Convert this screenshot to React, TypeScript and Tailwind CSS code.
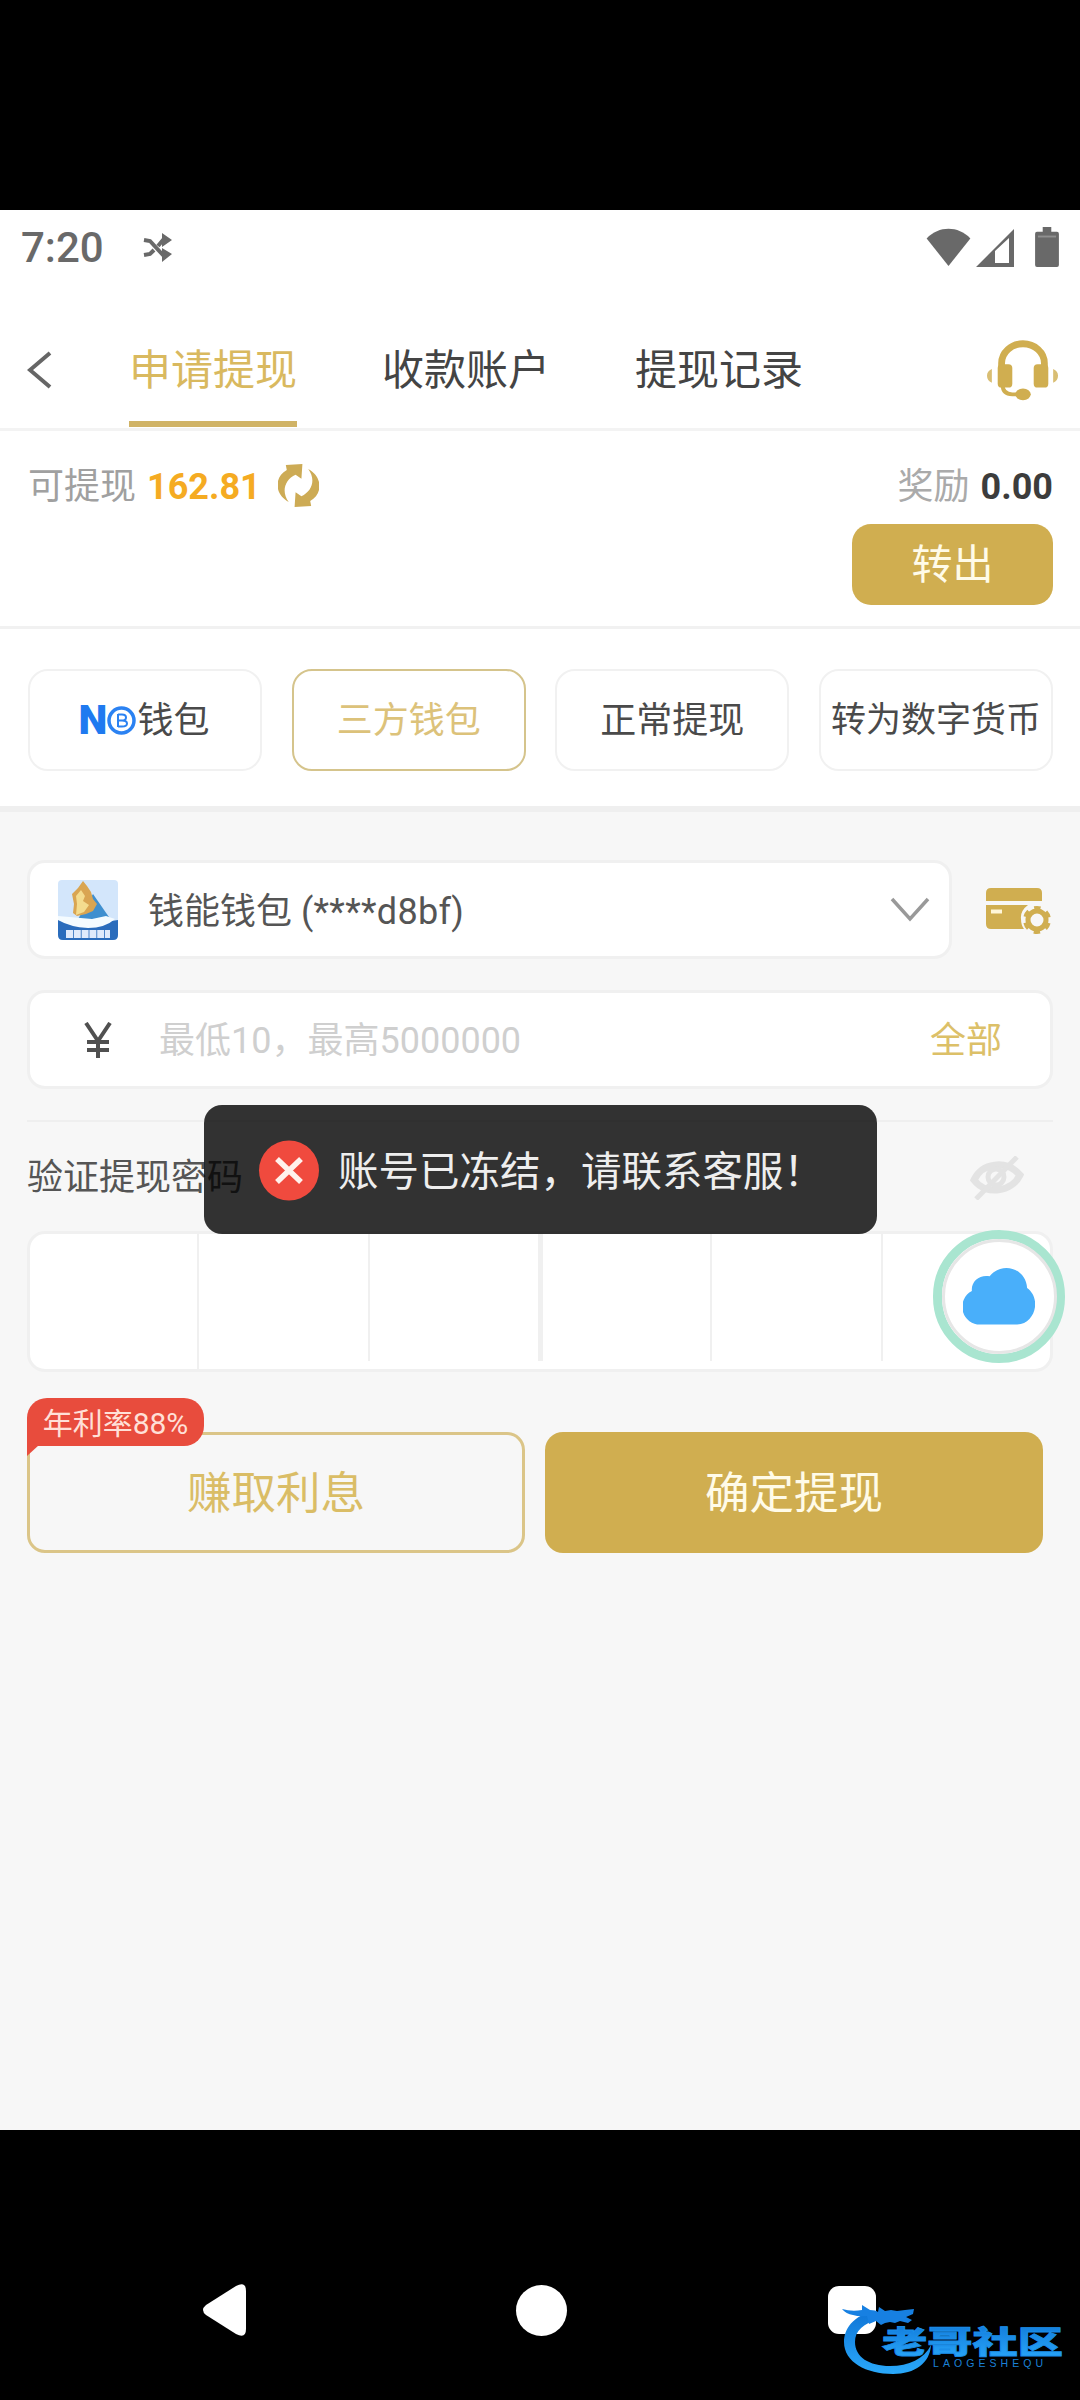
import clsx from 'clsx';

const tabs = ['申请提现', '收款账户', '提现记录'];
const methods = ['钱包', '三方钱包', '正常提现', '转为数字货币'];

function StatusBar() {
  return (
    <div className="flex h-[76px] items-center pl-[21px] pr-[21px] text-[#696969]">
      <span className="w-[84px] text-[42px] font-medium leading-none">7:20</span>
      <svg className="ml-[38px]" width="30" height="30" viewBox="0 0 30 30" fill="none" stroke="currentColor" strokeWidth="4">
        <path d="M1 7l6 1 13 14h3M1 22l6-1 4-4M15 13l5-6h3" />
        <path d="M19 0l10 7-10 7zM19 15l10 6-10 8z" fill="currentColor" stroke="none" />
      </svg>
      <svg className="-mt-[3px] ml-auto" width="45" height="38" viewBox="0 0 46 40" fill="currentColor">
        <path d="M0 11C13-2.500 33-2.500 46 11L23 40z" />
      </svg>
      <svg className="ml-[5px]" width="38" height="38" viewBox="0 0 38 38" fill="currentColor">
        <path fillRule="evenodd" d="M0 38L38 0v38zM19 22v12h14V9z" />
      </svg>
      <svg className="-mt-[3px] ml-[21px]" width="24" height="40" viewBox="0 0 25 42" fill="currentColor">
        <path d="M8 0h9v5h6q2 0 2 2v33q0 2-2 2H2q-2 0-2-2V7q0-2 2-2h6z" />
        <path d="M3 10h19" stroke="#8f8f8f" strokeWidth="2" />
      </svg>
    </div>
  );
}

function Headset() {
  return (
    <svg width="72" height="64" viewBox="0 0 74 64" fill="#d0ae50">
      <path d="M15 28v-4a22 20 0 0 1 44 0v4" fill="none" stroke="#d0ae50" strokeWidth="7" />
      <rect x="11" y="25" width="15" height="24" rx="4" />
      <rect x="48" y="25" width="15" height="24" rx="4" />
      <path d="M5 30v14q-5-2-5-7t5-7zM68 30v14q5-2 5-7t-5-7z" opacity=".8" />
      <path d="M16 46q0 10 10 10h6" fill="none" stroke="#d0ae50" strokeWidth="4" />
      <ellipse cx="37" cy="56" rx="8" ry="6" />
    </svg>
  );
}

function Header() {
  return (
    <div className="flex h-[145px] items-center border-b-[3px] border-[#f3f3f3] pl-[27px] pr-[21px]">
      <svg className="mt-[26px]" width="26" height="38" viewBox="0 0 26 38" fill="none" stroke="#666" strokeWidth="4">
        <path d="M23 2L3 19l20 17" />
      </svg>
      <div className="ml-[76px] flex h-full gap-[85px]">
        {tabs.map((tab, i) => (
          <div
            key={tab}
            className={clsx(
              'flex h-[141px] w-[168px] items-center justify-center whitespace-nowrap border-b-[6px] pt-[35px] text-[42px] leading-none',
              i === 0 ? 'border-[#d0b366] text-[#d9b95f]' : 'border-transparent text-[#444]',
            )}
          >
            {tab}
          </div>
        ))}
      </div>
      <div className="ml-auto pt-[28px]">
        <Headset />
      </div>
    </div>
  );
}

function Balance() {
  return (
    <div className="flex h-[198px] justify-between border-b-[3px] border-[#f1f1f1] pl-7 pr-[27px] pt-[34px]">
      <div className="flex h-[44px] items-center text-[36px] leading-none">
        <span className="text-[#a0a0a0]">可提现</span>
        <span className="ml-[11px] font-bold text-[#f5ab22]">162.81</span>
        <svg className="-mt-[3px] ml-[17px]" width="41" height="43" viewBox="0 0 42 44" fill="#cdab55">
          <path d="M11 39C-4 31-4 13 9 6L8 1l17-1-1 15-6-4C7 16 3 28 11 39z" />
          <path d="M31 5c15 8 15 26 2 33l1 5-17 1 1-15 6 4C35 28 39 16 31 5z" />
        </svg>
      </div>
      <div className="flex flex-col items-end">
        <div className="flex h-[44px] items-center text-[36px] leading-none">
          <span className="text-[#aaa]">奖励</span>
          <span className="ml-[11px] font-bold text-[#3c3c3c]">0.00</span>
        </div>
        <button className="mt-[15px] flex h-[81px] w-[201px] items-center justify-center rounded-[19px] bg-[#d0ae50] pt-[2px] text-[41px] leading-none text-[#fffbe8]">
          转出
        </button>
      </div>
    </div>
  );
}

function Methods() {
  return (
    <div className="flex h-[183px] justify-between border-b-[6px] border-[#efefef] pl-[28px] pr-[27px] pt-[40px]">
      {methods.map((name, i) => (
        <button
          key={name}
          className={clsx(
            'flex h-[102px] w-[234px] items-center justify-center whitespace-nowrap rounded-[20px] border-2 pt-px leading-none',
            i === 1 ? 'border-[#d5c48c] text-[#dcc27a]' : 'border-[#f1f1f1] text-[#4a4a4a]',
            i === 3 ? 'text-[35px]' : 'text-[36px]',
          )}
        >
          {i === 0 && (
            <>
              <span className="-ml-[2px] text-[41px] font-black text-[#1f7af0]">N</span>
              <svg className="mr-px" width="29" height="29" viewBox="0 0 29 29" fill="none" stroke="#2b82f2">
                <circle cx="14.500" cy="14.500" r="12.500" strokeWidth="3.500" />
                <path d="M11 8v13M11 8.500h4q4 0 4 3t-4 3h-4M15 14.500q5 0 5 3t-5 3h-4" strokeWidth="2" />
              </svg>
            </>
          )}
          {name}
        </button>
      ))}
    </div>
  );
}

function WalletLogo() {
  return (
    <svg width="60" height="60" viewBox="0 0 60 60">
      <rect width="60" height="60" rx="4" fill="#d3e6fb" />
      <path d="M35 14l18 26-33-1z" fill="#3f8fcf" />
      <path d="M25 1l4 5 4 6 2 7 4 5-4 7-7 3-9 2-4-3 1-9-2-10 6-6z" fill="#d9a552" />
      <path d="M23 10l4 6-2 5 6 4-5 7-8 3 1-11-1-8z" fill="#f4dc8e" />
      <path d="M0 40l20 2 20 1 20-3v15q0 5-5 5H5q-5 0-5-5z" fill="#2a6cbc" />
      <path d="M0 36l34 3 14-3 9 3q-10 9-27 9Q12 47 0 40z" fill="#f4fbff" />
      <path d="M8 54h44" stroke="#dfeafb" strokeWidth="8" strokeDasharray="7 .8" />
    </svg>
  );
}

function CardSettings() {
  return (
    <svg width="66" height="48" viewBox="0 0 66 48" fill="#d0ae50">
      <path d="M5 0h46q5 0 5 5v8H0V5q0-5 5-5z" />
      <path d="M0 17h42q-8 6-7 14 0 6 3 10H5q-5 0-5-5z" />
      <path d="M5 23.500h11" stroke="#fff6d8" strokeWidth="4" />
      <circle cx="51" cy="32" r="9" fill="none" stroke="#d0ae50" strokeWidth="5" />
      <circle cx="51" cy="32" r="12" fill="none" stroke="#d0ae50" strokeWidth="4" strokeDasharray="6.280 6.280" strokeDashoffset="9.420" />
    </svg>
  );
}

function Form() {
  return (
    <div className="pl-[27px] pr-[27px] pt-[48px]">
      <div className="flex items-center">
        <div className="flex h-[99px] w-[925px] items-center rounded-[18px] border-[3px] border-[#f0f0f0] bg-white pl-[28px] pr-[19px] text-[36px] leading-none text-[#555]">
          <WalletLogo />
          <span className="ml-[30px] pt-[4px]">
            钱能钱包 <span className="tracking-[0.3px]">(****d8bf)</span>
          </span>
          <svg className="ml-auto" width="40" height="26" viewBox="0 0 40 26" fill="none" stroke="#999" strokeWidth="3.500">
            <path d="M2 2l18 20L38 2" />
          </svg>
        </div>
        <div className="ml-[34px] pt-[4px]">
          <CardSettings />
        </div>
      </div>

      <div className="mt-[31px] flex h-[99px] items-center rounded-[18px] border-[3px] border-[#f0f0f0] bg-white pl-[53px] pr-[48px] text-[36px] leading-none">
        <svg className="mr-[46px]" width="30" height="36" viewBox="0 0 30 36" fill="none" stroke="#505050" strokeWidth="4">
          <path d="M3 1l12 18L27 1M15 18v18M4 20h22M4 28h22" />
        </svg>
        <span className="pt-[2px] text-[#cfcfcf]">最低10，最高5000000</span>
        <span className="ml-auto pt-[2px] text-[#dcc068]">全部</span>
      </div>

      <div className="mt-[31px] flex h-[111px] items-center justify-between border-t-2 border-[#efefef] pr-[29px] pt-[3px] text-[36px] leading-none text-[#555]">
        <span>验证提现密码</span>
        <svg width="54" height="44" viewBox="0 0 54 44" fill="none" stroke="#e3e3e3">
          <path d="M4 24C12 7 36 3 50 19 42 36 16 40 4 24z" strokeWidth="7" />
          <circle cx="26" cy="21" r="8" strokeWidth="5" />
          <path d="M47 1L6 43" strokeWidth="5" />
        </svg>
      </div>

      <div className="flex h-[141px] overflow-hidden rounded-[18px] border-[3px] border-[#f0f0f0] bg-white">
        <div className="w-[169px] border-r-2 border-[#f0f0f0]" />
        <div className="h-[127px] w-[171px] border-r-2 border-[#f0f0f0]" />
        <div className="h-[127px] w-[173px] border-r-[5px] border-[#f0f0f0]" />
        <div className="h-[127px] w-[169px] border-r-2 border-[#f0f0f0]" />
        <div className="h-[127px] w-[171px] border-r-2 border-[#f0f0f0]" />
      </div>

      <div className="mt-[60px] flex gap-[20px] text-[44.500px] leading-none">
        <button className="relative flex h-[121px] w-[498px] items-center justify-center rounded-[18px] border-[3px] border-[#dbc588] pt-[3px] text-[#dabd66]">
          赚取利息
          <span className="absolute left-[-3px] top-[-37px] flex h-[48px] w-[177px] items-center justify-center whitespace-nowrap rounded-[20px] rounded-bl-none bg-[#e84c3d] pt-[3px] text-[30px] leading-none text-[#ffe0d8]">
            年利率88%
            <svg className="absolute left-0 top-[47px]" width="12" height="11" viewBox="0 0 12 11" fill="#e84c3d">
              <path d="M0 0h12L0 11z" />
            </svg>
          </span>
        </button>
        <button className="flex h-[121px] w-[498px] items-center justify-center rounded-[18px] bg-[#d0ae50] pt-[3px] text-[#fffbe8]">
          确定提现
        </button>
      </div>
    </div>
  );
}

function Toast() {
  return (
    <div className="absolute left-[204px] top-[1105px] flex h-[129px] w-[673px] items-center rounded-[18px] bg-black/80 pl-[54px] text-[40.500px] leading-none text-[#eee]">
      <svg width="62" height="62" viewBox="0 0 62 62" fill="none">
        <circle cx="31" cy="31.500" r="30" fill="#f04a3e" />
        <path d="M19 20l24 23M43 20L19 43" stroke="#fff1ec" strokeWidth="5.500" />
      </svg>
      <span className="ml-[18px] whitespace-nowrap pt-[6px]">账号已冻结，请联系客服！</span>
    </div>
  );
}

function FloatingCloud() {
  return (
    <div className="absolute left-[933px] top-[1230px] flex h-[133px] w-[132px] items-center justify-center rounded-full border-[9px] border-[#a9e5d0] bg-white">
      <div className="flex size-[115px] shrink-0 items-center justify-center rounded-full border-[3px] border-[#e6e6e6]">
        <svg className="-mt-[2px]" width="72" height="58" viewBox="0 0 73 58" fill="#49affa">
          <path d="M18 58a18 18 0 0 1-9-34C8 14 17 7 27 9 40-7 64 1 65 21 80 32 73 57 55 58z" />
        </svg>
      </div>
    </div>
  );
}

function NavBar() {
  return (
    <div className="relative h-[270px] bg-black">
      <div className="flex items-center pl-[203px] pt-[154px]">
        <svg width="43" height="52" viewBox="0 0 43 52" fill="#fff">
          <path d="M3 21L33 2q10-5 10 5v38q0 10-10 5L3 31q-6-5 0-10z" />
        </svg>
        <span className="ml-[270px] size-[51px] rounded-full bg-white" />
        <span className="ml-[261px] size-[48px] rounded-[11px] bg-white" />
      </div>
      <svg className="absolute left-[840px] top-[168px]" width="230" height="80" viewBox="0 0 230 80">
        <defs>
          <linearGradient id="dragon" x1="0" y1="0" x2="0" y2="1">
            <stop offset="0" stopColor="#0e74d6" />
            <stop offset="1" stopColor="#2aa9fb" />
          </linearGradient>
        </defs>
        <path d="M36 13C12 17 4 32 4 44c0 20 22 32 49 32 22 0 37-11 38-29-7 14-22 21-41 21-21 0-35-9-35-24 0-11 8-19 25-23z" fill="url(#dragon)" />
        <path d="M2 11q10 3 20 1V7l8 5q6 0 8 2l1-5 6 4 6-1 6 1 8-1 9-1-1 5-7 3 6 3-4 3-8-2-5 2-5-1-5 1-4 2-5-4-7 3-2-8q-8 1-14-1Q6 16 2 11z" fill="#1780e2" />
        <text x="42" y="55" textLength="181" lengthAdjust="spacingAndGlyphs" fontSize="31" fontWeight="900" fontFamily="'Noto Sans CJK SC', sans-serif" fill="url(#dragon)" stroke="#1c8ee9" strokeWidth=".8">
          老哥社区
        </text>
        <text x="93" y="69" textLength="110" fontSize="10.500" fontFamily="'Liberation Sans', sans-serif" fill="#1b80d6">
          LAOGESHEQU
        </text>
      </svg>
    </div>
  );
}

export default function App() {
  return (
    <div className="relative flex h-[2400px] w-[1080px] flex-col overflow-hidden bg-black font-['Roboto','Noto_Sans_CJK_SC',sans-serif]">
      <div className="mt-[210px] h-[1920px] bg-[#f7f7f7]">
        <div className="bg-white">
          <StatusBar />
          <Header />
          <Balance />
          <Methods />
        </div>
        <Form />
      </div>
      <NavBar />
      <Toast />
      <FloatingCloud />
    </div>
  );
}
